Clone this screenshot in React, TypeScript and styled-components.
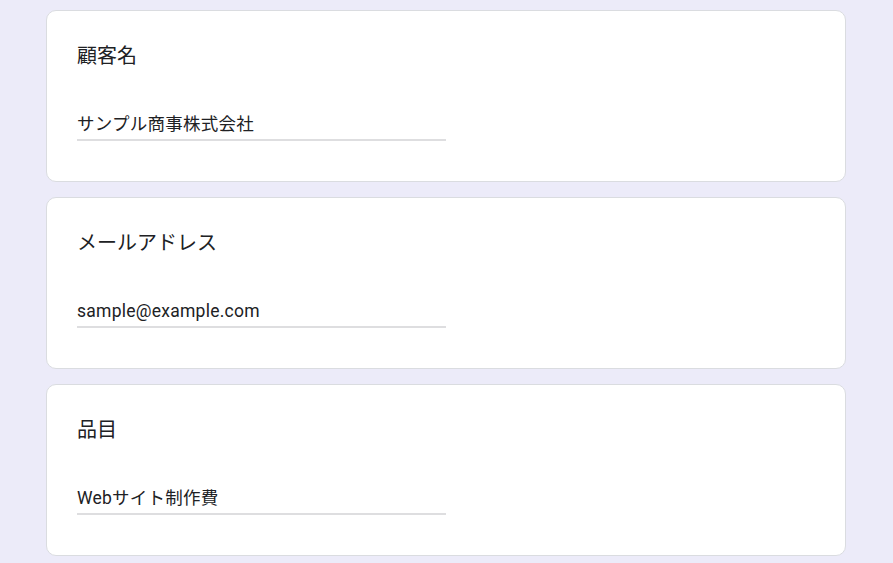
import React from "react";
import styled, { createGlobalStyle } from "styled-components";

const GlobalStyle = createGlobalStyle`
  html, body {
    margin: 0;
    padding: 0;
    background: #ecebf9;
  }
  body {
    font-family: Roboto, "Noto Sans CJK JP", sans-serif;
    color: #202124;
  }
`;

const Page = styled.div`
  width: 800px;
  margin-left: calc((100% - 801px) / 2);
  padding-top: 10px;
  display: flex;
  flex-direction: column;
  gap: 15px;
`;

const Card = styled.section`
  background: #ffffff;
  border: 1px solid #dadce0;
  border-radius: 10px;
  padding: 30px 30px 40px;
  display: flex;
  flex-direction: column;
`;

const Title = styled.div`
  font-size: 20px;
  line-height: 30px;
  letter-spacing: 0;
`;

const Answer = styled.div`
  margin-top: 40px;
  width: 50%;
  font-size: 17.5px;
  line-height: 27px;
  letter-spacing: 0.25px;
  padding-bottom: 1px;
  border-bottom: 2px solid #dedee0;
`;

const items = [
  { title: "顧客名", value: "サンプル商事株式会社" },
  { title: "メールアドレス", value: "sample@example.com" },
  { title: "品目", value: "Webサイト制作費" },
];

export default function App() {
  return (
    <>
      <GlobalStyle />
      <Page>
        {items.map((it) => (
          <Card key={it.title}>
            <Title>{it.title}</Title>
            <Answer>{it.value}</Answer>
          </Card>
        ))}
      </Page>
    </>
  );
}
